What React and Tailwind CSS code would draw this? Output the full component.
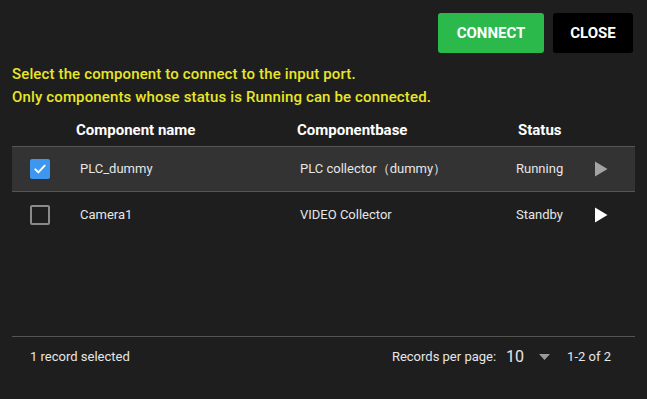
import { useState } from 'react'

const rows = [
  { id: 1, name: 'PLC_dummy', base: 'PLC collector（dummy）', status: 'Running' },
  { id: 2, name: 'Camera1', base: 'VIDEO Collector', status: 'Standby' },
]

function Checkbox({ checked, onClick }) {
  if (checked) {
    return (
      <button onClick={onClick} className="w-[20px] h-[20px] rounded-[2px] bg-[#3d97ef] flex items-center justify-center">
        <svg width="16" height="16" viewBox="0 0 24 24" fill="none" stroke="white" strokeWidth="3" strokeLinecap="round" strokeLinejoin="round">
          <path d="M5 12.5l4.5 4.5L19 7" />
        </svg>
      </button>
    )
  }
  return <button onClick={onClick} className="w-[20px] h-[20px] rounded-[2px] border-2 border-[#8a8a8a]" />
}

function Play({ dim }) {
  return (
    <svg width="14" height="16" viewBox="0 0 14 16">
      <path d="M1 0.5L13.5 8L1 15.5Z" fill={dim ? '#a3a3a3' : '#ffffff'} />
    </svg>
  )
}

export default function App() {
  const [selected, setSelected] = useState([1])

  const toggle = (id) => {
    setSelected((s) => (s.includes(id) ? s.filter((x) => x !== id) : [...s, id]))
  }

  return (
    <div className="w-full h-[399px] bg-[#1e1e1e] text-white font-['Roboto',sans-serif] flex flex-col">
      <div className="flex justify-end gap-[9px] pt-[13px] pr-[14px]">
        <button className="w-[106px] h-[40px] rounded-[3px] bg-[#2cb94c] text-[15px] font-bold">CONNECT</button>
        <button className="w-[80px] h-[40px] rounded-[3px] bg-black text-[15px] font-bold">CLOSE</button>
      </div>

      <div className="pl-[12px] pt-[10px] text-[15px] font-medium tracking-[0.14px] text-[#e8e626] leading-[23px]">
        <p>Select the component to connect to the input port.</p>
        <p>Only components whose status is Running can be connected.</p>
      </div>

      <div className="mx-[12px] mt-[6px] flex-1 flex flex-col">
        <div className="grid grid-cols-[64px_221px_221px_1fr] h-[32px] items-center text-[15px] font-bold border-b border-[#555]">
          <div />
          <div>Component name</div>
          <div>Componentbase</div>
          <div>Status</div>
        </div>
        {rows.map((r) => {
          const on = selected.includes(r.id)
          return (
            <div
              key={r.id}
              className={`grid grid-cols-[68px_220px_216px_1fr] h-[45px] items-center text-[13px] text-[#e6e6e6] ${on ? 'bg-[#333333] border-b border-[#555]' : ''}`}
            >
              <div className="pl-[18px] flex">
                <Checkbox checked={on} onClick={() => toggle(r.id)} />
              </div>
              <div>{r.name}</div>
              <div>{r.base}</div>
              <div className="flex items-center">
                <span className="w-[78px]">{r.status}</span>
                <Play dim={r.status === 'Running'} />
              </div>
            </div>
          )
        })}
        <div className="flex-1" />
        <div className="border-t border-[#555] h-[40px] mb-[23px] flex items-center text-[13px] text-[#e6e6e6]">
          <span className="pl-[18px]">{selected.length} record selected</span>
          <div className="ml-auto flex items-center pr-[24px]">
            <span>Records per page:</span>
            <span className="ml-[10px] text-[16px]">10</span>
            <svg className="ml-[15px]" width="11" height="6" viewBox="0 0 11 6">
              <path d="M0 0H11L5.5 6Z" fill="#9a9a9a" />
            </svg>
            <span className="ml-[17px]">1-2 of 2</span>
          </div>
        </div>
      </div>
    </div>
  )
}
